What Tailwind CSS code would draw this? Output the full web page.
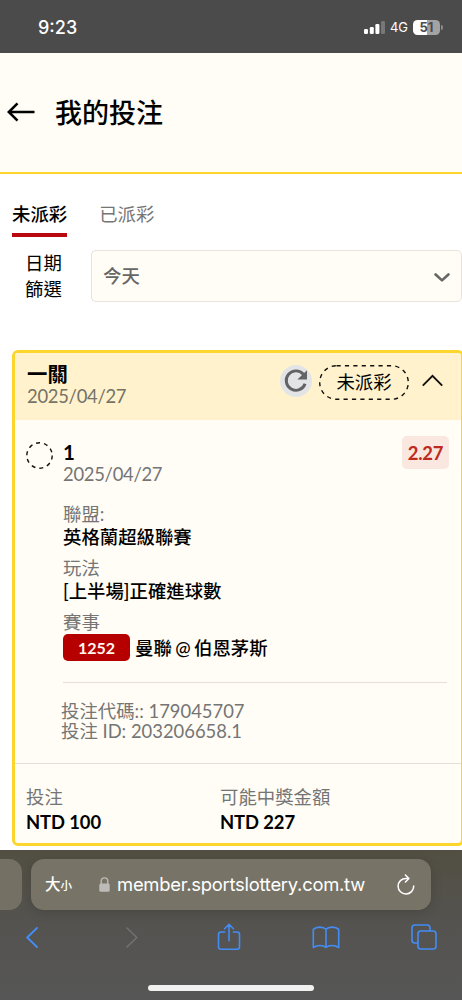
<!DOCTYPE html>
<html lang="zh-Hant">
<head>
  <meta charset="UTF-8">
  <meta name="viewport" content="width=device-width, initial-scale=1">
  <title>我的投注</title>
  <script src="https://cdn.jsdelivr.net/npm/@tailwindcss/browser@4"></script>
</head>
<body class="w-[462px] h-[1000px] overflow-hidden bg-white text-black flex flex-col font-['Lato','Noto_Sans_CJK_TC',sans-serif] text-[18.4px]">

  <!-- 狀態列 -->
  <div class="h-[53px] shrink-0 bg-[#4b4b4b] text-white flex items-center justify-between pl-[38px] pr-[19px] pt-[2px] font-['Inter',sans-serif]">
    <span class="text-[18px] font-medium">9:23</span>
    <div class="flex items-center">
      <svg class="w-[21px] h-[14px] -mt-[2px]" viewBox="0 0 21 14" fill="#fff">
        <rect x="0" y="9" width="4" height="5" rx="1.2"/>
        <rect x="5.8" y="7" width="4" height="7" rx="1.2"/>
        <rect x="11.4" y="4" width="4" height="10" rx="1.2"/>
        <rect x="17" y="1" width="4" height="13" rx="1.2" fill="#777"/>
      </svg>
      <span class="ml-[5px] text-[13px] leading-none">4G</span>
      <div class="ml-[5px] w-[27px] h-[15px] rounded-[4.5px] bg-linear-to-r from-white from-51% to-[#a3a3a3] to-51% text-[#4b4b4b] text-[13px] leading-[15px] font-bold text-center">51</div>
      <div class="ml-px w-[2px] h-[5px] rounded-r-full bg-[#8d8d8d]"></div>
    </div>
  </div>

  <!-- 標題 -->
  <header class="h-[121px] shrink-0 bg-[#fffdf5] border-b-2 border-[#fdd62d] flex items-center pl-[7px]">
    <svg class="w-[28px] h-[20px] -mt-[2px]" viewBox="0 0 28 20" fill="none" stroke="#000" stroke-width="2.6">
      <path d="M27.5 10H2M10.5 1.3L1.8 10l8.7 8.7"/>
    </svg>
    <h1 class="ml-[20px] text-[27px] leading-none font-medium">我的投注</h1>
  </header>

  <!-- 頁籤 -->
  <nav class="mt-[25px] h-[38px] shrink-0 pl-3 flex gap-8">
    <div class="h-full border-b-4 border-[#b9080f] font-medium leading-[30px]">未派彩</div>
    <div class="h-full text-[#757575] leading-[30px]">已派彩</div>
  </nav>

  <!-- 日期篩選 -->
  <div class="mt-[13px] h-[52px] shrink-0 flex">
    <div class="w-[91px] pl-[25px] leading-[26px]">日期<br>篩選</div>
    <div class="flex-1 border border-[#e8e2da] rounded-[5px] bg-[#fffdf5] pl-[11px] pr-[11px] flex items-center justify-between text-[#666] font-medium">
      <span class="mt-px">今天</span>
      <svg class="w-[16px] h-[9px] mt-[2px]" viewBox="0 0 16 9" fill="none" stroke="#666" stroke-width="2.6" stroke-linecap="round" stroke-linejoin="round">
        <path d="M1.6 1.5L8 7.4l6.4-5.9"/>
      </svg>
    </div>
  </div>

  <!-- 投注卡片 -->
  <section class="mt-[48px] ml-3 w-[452px] h-[496px] shrink-0 border-[3px] border-[#fdd62d] rounded-[6px] bg-[#fffdf5] overflow-hidden">
    <div class="h-[67px] bg-[#fff2cc] flex pl-[12px]">
      <div class="flex-1">
        <div class="mt-[9px] text-[20.4px] leading-[24px] font-bold">一關</div>
        <div class="leading-[20px] tracking-[-0.27px] text-[#757266]">2025/04/27</div>
      </div>
      <div class="flex items-center h-[34px] mt-[12px] pr-[18px]">
        <svg class="w-[32px] h-[32px] -mt-[3px]" viewBox="0 0 32 32">
          <circle cx="16" cy="16" r="16" fill="#e3e4e6"/>
          <path d="M25.1 18.8A9.7 9.7 0 1 1 23.5 9.5" fill="none" stroke="#626366" stroke-width="2.9"/>
          <path d="M27 5.2v9.4h-9.6z" fill="#626366"/>
        </svg>
        <div class="relative ml-[7px] w-[90px] h-[35px] flex items-center justify-center">
          <svg class="absolute inset-0 w-[90px] h-[35px]" fill="none" stroke="#111" stroke-width="1.4" stroke-dasharray="4.2 4.2">
            <rect x="0.7" y="0.7" width="88.6" height="33.6" rx="16.8"/>
          </svg>
          <span class="mt-[2px]">未派彩</span>
        </div>
        <svg class="ml-[13px] w-[21px] h-[13px] -mt-[4px]" viewBox="0 0 21 13" fill="none" stroke="#111" stroke-width="1.9">
          <path d="M.8 11.6L10.5 1.8l9.7 9.8"/>
        </svg>
      </div>
    </div>

    <div class="relative h-[343px] pl-[48px]">
      <svg class="absolute left-[11px] top-[22px] w-[27px] h-[27px]" fill="none" stroke="#111" stroke-width="1.4" stroke-dasharray="4 4">
        <circle cx="13.5" cy="13.5" r="12.7"/>
      </svg>
      <div class="absolute right-[12px] top-[16px] w-[47px] h-[33px] rounded-[5px] bg-[#f9e7e0] text-[#bf2a20] font-bold text-[18.4px] tracking-[-0.2px] leading-[34px] text-center">2.27</div>

      <div class="pt-[20px] text-[20.5px] leading-[24px] font-bold">1</div>
      <div class="leading-[20px] tracking-[-0.27px] text-[#757575]">2025/04/27</div>

      <div class="mt-[19px] leading-[22px] text-[#757575]">聯盟:</div>
      <div class="leading-[24px] font-medium">英格蘭超級聯賽</div>
      <div class="mt-[8px] leading-[22px] text-[#757575]">玩法</div>
      <div class="leading-[24px] font-medium">[上半場]正確進球數</div>
      <div class="mt-[8px] leading-[22px] text-[#757575]">賽事</div>
      <div class="mt-px flex items-center h-[27px]">
        <span class="w-[67px] h-[27px] rounded-[5px] bg-[#b60000] text-[#fff7ee] text-[16px] leading-[27px] font-bold text-center">1252</span>
        <span class="ml-[5px] mt-[2px] font-medium [word-spacing:-1.2px]">曼聯 @ 伯恩茅斯</span>
      </div>
      <div class="mt-[21px] w-[384px] h-px bg-[#e6e0d9]"></div>
      <div class="mt-[18px] -ml-[2px] leading-[20px] text-[#757575]">投注代碼:: 179045707<br>投注 ID: 203206658.1</div>
    </div>

    <div class="border-t border-[#e6e0d9] pl-[11px] pt-[21px] flex">
      <div class="w-[194px]">
        <div class="leading-[24px] text-[#757575]">投注</div>
        <div class="mt-px leading-[25px] font-bold tracking-[-0.1px]">NTD 100</div>
      </div>
      <div>
        <div class="leading-[24px] text-[#757575]">可能中獎金額</div>
        <div class="mt-px leading-[25px] font-bold tracking-[-0.1px]">NTD 227</div>
      </div>
    </div>
  </section>

  <!-- 瀏覽器工具列 -->
  <footer class="mt-[4px] flex-1 bg-linear-to-b from-[#524f42] via-[#545350] via-50% to-[#565656] font-['Inter','Noto_Sans_CJK_TC',sans-serif] text-white">
    <div class="flex gap-[9px] pt-[9px]">
      <div class="w-[22px] h-[51px] rounded-r-[13px] bg-[#747164]"></div>
      <div class="w-[400px] h-[51px] rounded-[13px] bg-[#777467] shadow-[0_2px_12px_rgba(0,0,0,0.15)] flex items-center pl-[14px] pr-[16px]">
        <span class="text-[15.5px] font-medium leading-none">大<span class="text-[11.5px]">小</span></span>
        <svg class="ml-[27px] w-[11px] h-[15px]" viewBox="0 0 11 15">
          <path d="M2.2 7V4.2a3.3 3.3 0 0 1 6.6 0V7" fill="none" stroke="#bdbbb7" stroke-width="1.4"/>
          <rect x="0.3" y="6.5" width="10.4" height="8.3" rx="1.6" fill="#bdbbb7"/>
        </svg>
        <span class="ml-[7px] text-[18.4px] tracking-[-0.25px]">member.sportslottery.com.tw</span>
        <svg class="ml-auto w-[18px] h-[21px] -mt-px" viewBox="0 0 18 21" fill="none" stroke="#fff" stroke-width="1.5" stroke-linecap="round" stroke-linejoin="round">
          <path d="M16.7 12A7.8 7.8 0 1 1 9 4.4h2.8M8.4 1l3.5 3.5L8.4 8"/>
        </svg>
      </div>
    </div>
    <div class="mt-[12px] h-[30px] pl-[26px] flex items-center text-[#438df5]">
      <svg class="w-[12px] h-[21px]" viewBox="0 0 12 21" fill="none" stroke="currentColor" stroke-width="1.8" stroke-linecap="round" stroke-linejoin="round"><path d="M11 1L1.2 10.5 11 20"/></svg>
      <svg class="ml-[88px] w-[12px] h-[21px]" viewBox="0 0 12 21" fill="none" stroke="#71716f" stroke-width="1.6" stroke-linecap="round" stroke-linejoin="round"><path d="M1 1l9.8 9.5L1 20"/></svg>
      <svg class="ml-[79px] w-[24px] h-[28px]" viewBox="0 0 24 28" fill="none" stroke="currentColor" stroke-width="1.6" stroke-linecap="round" stroke-linejoin="round">
        <path d="M7.7 9H4a2.5 2.5 0 0 0-2.5 2.5v12.3A2.5 2.5 0 0 0 4 26.3h16a2.5 2.5 0 0 0 2.5-2.5V11.5A2.5 2.5 0 0 0 20 9h-3.7M12 17.8V1.5M7.6 5.7L12 1.3l4.4 4.4"/>
      </svg>
      <svg class="ml-[71px] w-[28px] h-[23px]" viewBox="0 0 28 23" fill="none" stroke="currentColor" stroke-width="1.6" stroke-linecap="round" stroke-linejoin="round">
        <path d="M14 3.3C11.5.5 4.5.2 1.3 3.4v18.1c3.5-2.6 10-2.6 12.7 0 2.7-2.6 9.2-2.6 12.7 0V3.4C23.5.2 16.5.5 14 3.3zM14 3.3v18.2"/>
      </svg>
      <svg class="ml-[71px] w-[26px] h-[26px]" viewBox="0 0 26 26" fill="none" stroke="currentColor" stroke-width="1.6">
        <rect x="7" y="7" width="18" height="18" rx="2.8"/>
        <path d="M7 19H3.8A2.8 2.8 0 0 1 1 16.2V3.8A2.8 2.8 0 0 1 3.8 1h12.4A2.8 2.8 0 0 1 19 3.8V7"/>
      </svg>
    </div>
    <div class="mt-[33px] mx-auto w-[166px] h-[6px] rounded-full bg-[#f1f1f1]"></div>
  </footer>
</body>
</html>
